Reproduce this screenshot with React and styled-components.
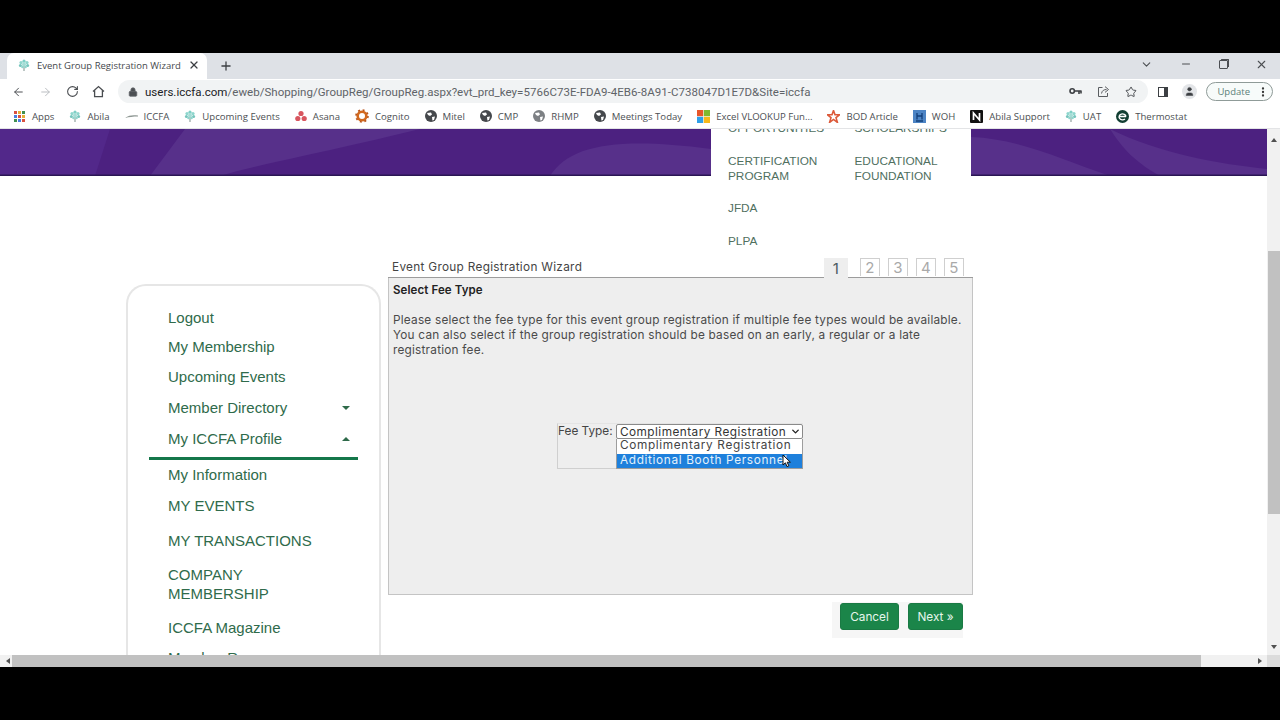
import React from "react";
import styled, { createGlobalStyle } from "styled-components";
import {
  ArrowLeft,
  ArrowRight,
  RotateCw,
  Lock,
  Star,
  X,
  Plus,
  Minus,
  ChevronDown,
  MoreVertical,
  User,
} from "lucide-react";

////colors////
const green = "#2f6b4b";
const chromeText = "#4a4d51";
const wizardFont = `Inter, "Open Sans", sans-serif`;

const GlobalStyle = createGlobalStyle`
  html, body { margin: 0; padding: 0; background: #000; overflow: hidden; }
  * { box-sizing: border-box; }
`;

const Screen = styled.div`
  width: 1280px;
  height: 720px;
  padding-top: 53px;
  background: #000;
  display: flex;
  flex-direction: column;
  font-family: "Open Sans", sans-serif;
`;

////browser chrome////
const TabStrip = styled.div`
  height: 26px;
  flex: none;
  background: #dee1e6;
  display: flex;
  align-items: stretch;
  padding-left: 7px;
`;
const Tab = styled.div`
  width: 200px;
  background: #fff;
  border-radius: 7px 7px 0 0;
  display: flex;
  align-items: center;
  padding: 0 7px 2px 11px;
  font-size: 9.5px;
  color: #45484c;
`;
const TabTitle = styled.span`
  flex: 1;
  margin-left: 7px;
  white-space: nowrap;
`;
const NewTab = styled.div`
  width: 37px;
  display: flex;
  align-items: center;
  justify-content: center;
  color: #3c3f43;
  padding-bottom: 1px;
`;
const WindowControls = styled.div`
  margin-left: auto;
  display: flex;
  align-items: center;
  gap: 27px;
  padding: 0 12px 4px 0;
  color: #4c4f53;
`;
const RestoreIcon = styled.div`
  width: 9px;
  height: 9px;
  border: 1px solid #4c4f53;
  border-radius: 1px;
  box-shadow: 1.5px -1.5px 0 -0.5px #4c4f53;
`;
const Toolbar = styled.div`
  height: 25px;
  flex: none;
  background: #fff;
  display: flex;
  align-items: center;
  padding: 0 7px 0 12px;
  color: ${chromeText};
`;
const NavButton = styled.div`
  width: 13px;
  margin-right: ${(props) => props.$gap}px;
  display: flex;
  justify-content: center;
  color: ${(props) => (props.$off ? "#b9bcc0" : chromeText)};
`;
const Omnibox = styled.div`
  margin-left: 13px;
  width: 1030px;
  height: 23px;
  background: #f1f3f4;
  border-radius: 12px;
  display: flex;
  align-items: center;
  padding-left: 10px;
  font-family: Roboto, sans-serif;
  font-size: 11.5px;
  color: #5f6368;
  letter-spacing: 0.03px;
  white-space: nowrap;
`;
const Host = styled.span`
  color: #202124;
  margin-left: 7px;
`;
const OmniActions = styled.div`
  margin-left: auto;
  display: flex;
  align-items: center;
  gap: 15px;
  padding-right: 11px;
  color: #4c4f53;
`;
const ToolActions = styled.div`
  display: flex;
  align-items: center;
  gap: 14px;
  margin-left: 10px;
`;
const SidePanelIcon = styled.div`
  width: 10px;
  height: 10px;
  border: 1.5px solid #3c3f43;
  border-right-width: 4px;
`;
const Avatar = styled.div`
  width: 15px;
  height: 15px;
  border-radius: 50%;
  background: #e3e5e8;
  display: flex;
  align-items: center;
  justify-content: center;
  color: #3c3f43;
`;
const UpdateButton = styled.div`
  margin-left: 9px;
  width: 67px;
  height: 19px;
  border: 1px solid #8f9b98;
  border-radius: 10px;
  display: flex;
  align-items: center;
  justify-content: flex-end;
  padding-right: 3px;
  gap: 7px;
  font-size: 9.5px;
  color: #5b7f79;
  background: #f7fbfa;
`;
const Bookmarks = styled.div`
  height: 25px;
  flex: none;
  background: #fff;
  border-bottom: 1px solid #e3e4e6;
  display: flex;
  align-items: center;
  padding-left: 13px;
  font-size: 9.6px;
  color: #4c4f53;
`;
const Bookmark = styled.div`
  display: flex;
  align-items: center;
  gap: 6px;
  margin-right: 15px;
  white-space: nowrap;
`;

////page////
const Viewport = styled.div`
  height: 526px;
  flex: none;
  display: flex;
  background: #fff;
`;
const Page = styled.div`
  position: relative;
  width: 1267px;
  overflow: hidden;
`;
const Banner = styled.svg`
  display: block;
  width: 1267px;
  height: 47px;
`;
const MegaMenu = styled.div`
  position: absolute;
  top: -8px;
  left: 711px;
  width: 260px;
  height: 130px;
  padding-left: 17px;
  background: #fff;
  display: grid;
  grid-template-columns: 126.5px 110px;
  grid-auto-rows: min-content;
  row-gap: 17.5px;
  font-family: "Liberation Sans", sans-serif;
  font-size: 11.8px;
  line-height: 15px;
  color: #50705f;
`;
const MegaItem = styled.div`
  white-space: pre-line;
  grid-column: ${(props) => (props.$full ? "1 / -1" : "auto")};
`;
const Content = styled.div`
  display: flex;
  align-items: flex-start;
  padding: 82px 0 0 126px;
  gap: 7px;
`;
const Sidebar = styled.nav`
  width: 255px;
  height: 500px;
  margin-top: 26px;
  padding: 17px 0 0 40px;
  border: 2px solid #e6e6e6;
  border-bottom: 0;
  border-radius: 20px 20px 0 0;
  font-family: "Liberation Sans", sans-serif;
  font-size: 15px;
  color: ${green};
`;
const NavItem = styled.div`
  height: ${(props) => props.$h}px;
  display: flex;
  align-items: center;
  justify-content: space-between;
  padding-right: 29px;
  line-height: 19px;
  white-space: pre-line;
`;
const NavRule = styled.div`
  width: 209px;
  height: 3px;
  margin: 3px 0 0 -19px;
  background: #14774a;
`;
const Caret = styled.span`
  width: 0;
  height: 0;
  border-left: 4px solid transparent;
  border-right: 4px solid transparent;
  border-${(props) => (props.$up ? "bottom" : "top")}: 4px solid #2e6a4a;
`;
const Wizard = styled.div`
  width: 585px;
  font-family: ${wizardFont};
  color: #444;
`;
const WizardHead = styled.div`
  height: 20px;
  display: flex;
  align-items: flex-start;
  padding: 2px 9px 0 4px;
  border-bottom: 1px solid #9c9c9c;
  font-size: 11.8px;
  letter-spacing: 0.3px;
  line-height: 15px;
`;
const WizardTitle = styled.div`
  flex: 1;
`;
const Steps = styled.div`
  display: flex;
  gap: 8px;
  margin-top: -2px;
  height: 20px;
`;
const Step = styled.div`
  width: ${(props) => (props.$active ? "24px" : "20px")};
  height: ${(props) => (props.$active ? "20px" : "18px")};
  margin-right: ${(props) => (props.$active ? "-3px" : "0")};
  display: flex;
  align-items: center;
  justify-content: center;
  font-size: 15px;
  background: ${(props) => (props.$active ? "#eeeeee" : "#fff")};
  color: ${(props) => (props.$active ? "#4c5a62" : "#a9a9a9")};
  border: ${(props) => (props.$active ? "0" : "1px solid #cfcfcf")};
  border-bottom: 0;
  position: relative;
  left: ${(props) => (props.$active ? "-7px" : "0")};
`;
const Panel = styled.div`
  position: relative;
  height: 317px;
  padding: 5px 5px 0 4px;
  background: #eeeeee;
  border: 1px solid #c4c4c4;
  border-top: 0;
`;
const PanelTitle = styled.div`
  font-size: 11.5px;
  font-weight: 600;
  line-height: 15px;
  letter-spacing: 0.1px;
  color: #222;
`;
const PanelText = styled.p`
  margin: 15px 0 0;
  font-size: 11.8px;
  line-height: 15px;
  letter-spacing: 0.22px;
  color: #4a4a4a;
`;
const FeeBox = styled.div`
  position: absolute;
  top: 145px;
  left: 168px;
  width: 246px;
  height: 46px;
  display: flex;
  align-items: flex-start;
  border-left: 1px solid #cfcfcf;
  border-bottom: 1px solid #cfcfcf;
  border-top: 1px solid #e4e4e4;
  font-size: 11.8px;
  color: #444;
`;
const FeeLabel = styled.label`
  width: 58px;
  line-height: 14px;
`;
const SelectWrap = styled.div`
  width: 187px;
  font-size: 11.8px;
`;
const SelectBox = styled.div`
  height: 15px;
  display: flex;
  align-items: center;
  justify-content: space-between;
  padding: 0 1px 0 3px;
  border: 1px solid #8a8a8a;
  border-radius: 2px;
  background: #fff;
  color: #333;
  letter-spacing: 0.45px;
  white-space: nowrap;
`;
const Option = styled.div`
  height: 14.5px;
  padding-left: 3px;
  line-height: 13.5px;
  letter-spacing: 0.65px;
  white-space: nowrap;
  background: ${(props) => (props.$selected ? "#1e80dc" : "#fff")};
  color: ${(props) => (props.$selected ? "#e4f1fb" : "#444")};
`;
const OptionList = styled.div`
  border: 1px solid #9d9d9d;
  border-top: 0;
`;
const Pointer = styled.svg`
  position: absolute;
  top: 30px;
  left: 224px;
`;
const Actions = styled.div`
  display: flex;
  justify-content: flex-end;
  padding: 7px 10px 0 0;
`;
const ActionGroup = styled.div`
  display: flex;
  gap: 9px;
  padding: 1px 0 8px 8px;
  background: #f6f6f6;
`;
const GreenButton = styled.button`
  width: ${(props) => props.$w}px;
  height: 27px;
  padding: 0;
  border: 1px solid #1a7a44;
  border-radius: 3px;
  background: #1b8549;
  color: #e6f6ec;
  font-family: ${wizardFont};
  font-size: 11.8px;
`;

////scrollbars////
const VScroll = styled.div`
  width: 13px;
  background: #f1f1f1;
  display: flex;
  flex-direction: column;
  align-items: center;
  padding: 6px 0 3px;
`;
const VThumb = styled.div`
  width: 12px;
  height: 263px;
  margin-top: 109px;
  background: #c1c1c1;
`;
const ScrollArrow = styled.span`
  width: 0;
  height: 0;
  border: 3px solid transparent;
  border-${(props) => props.$side}-color: #505050;
  border-${(props) => props.$side}-width: 4px;
  margin: ${(props) => props.$m || 0};
`;
const HScroll = styled.div`
  height: 12px;
  flex: none;
  background: #f1f1f1;
  display: flex;
  align-items: center;
  padding-left: 3px;
`;
const HThumb = styled.div`
  width: 1189px;
  height: 12px;
  margin-left: 2px;
  background: #c1c1c1;
`;
const ScrollCorner = styled.div`
  width: 13px;
  height: 12px;
  margin-left: 2px;
  background: #dcdcdc;
`;

////icons////
const Tree = ({ size = 12 }) => (
  <svg width={size} height={size} viewBox="0 0 12 12">
    <rect x="5.5" y="7" width="1" height="5" fill="#7d8f8c" />
    <circle cx="6" cy="2.2" r="1.6" fill="#7fcfc6" />
    <circle cx="3" cy="3.6" r="1.6" fill="#8ed6cd" />
    <circle cx="9" cy="3.6" r="1.6" fill="#8ed6cd" />
    <circle cx="2.4" cy="6.4" r="1.5" fill="#77c5bd" />
    <circle cx="9.6" cy="6.4" r="1.5" fill="#77c5bd" />
    <circle cx="6" cy="5.6" r="2" fill="#a4dcd5" />
    <circle cx="4.4" cy="8" r="1.2" fill="#8ed6cd" />
    <circle cx="7.6" cy="8" r="1.2" fill="#8ed6cd" />
  </svg>
);
const AppsGrid = () => {
  const colors = ["#d9503f", "#e6b035", "#3f8f4f", "#4a7fe0", "#d9503f", "#e6b035", "#3f8f4f", "#4a7fe0", "#d9503f"];
  return (
    <svg width="13" height="13" viewBox="0 0 13 13">
      {colors.map((c, i) => (
        <rect key={i} x={1 + (i % 3) * 4} y={1 + Math.floor(i / 3) * 4} width="3" height="3" fill={c} />
      ))}
    </svg>
  );
};
const Leaf = () => (
  <svg width="13" height="13" viewBox="0 0 13 13">
    <path d="M0 8 C4 5 8 5 13 5.5 L13 6.5 C8 6.5 4 7 0 8Z" fill="#8d9692" />
  </svg>
);
const AsanaDots = () => (
  <svg width="12" height="12" viewBox="0 0 12 12">
    <circle cx="6" cy="3.5" r="2.6" fill="#d8565f" />
    <circle cx="2.8" cy="8.5" r="2.6" fill="#d8565f" />
    <circle cx="9.2" cy="8.5" r="2.6" fill="#d8565f" />
  </svg>
);
const CognitoGear = () => (
  <svg width="14" height="14" viewBox="0 0 14 14">
    <circle cx="7" cy="7" r="4.3" fill="none" stroke="#d2691e" strokeWidth="2.6" />
    <circle cx="7" cy="7" r="6" fill="none" stroke="#b9541a" strokeWidth="1.6" strokeDasharray="2 2.7" />
  </svg>
);
const Globe = ({ light }) => (
  <svg width="12" height="12" viewBox="0 0 12 12">
    <circle cx="6" cy="6" r="6" fill={light ? "#7d8084" : "#45484c"} />
    <path d="M2 3 L6 2.6 L7 4.6 L5 6 L3 5Z M7 7 L10 6.4 L9 10 L7.4 10.4Z" fill="#fff" />
  </svg>
);
const ExcelLogo = () => (
  <svg width="13" height="13" viewBox="0 0 13 13">
    <rect width="6.2" height="6.2" fill="#e8562a" />
    <rect x="6.8" width="6.2" height="6.2" fill="#7fb92e" />
    <rect y="6.8" width="6.2" height="6.2" fill="#2f9fe8" />
    <rect x="6.8" y="6.8" width="6.2" height="6.2" fill="#f6b81a" />
  </svg>
);
const BodStar = () => (
  <svg width="13" height="13" viewBox="0 0 13 13">
    <path d="M6.5 0.5 L8 4.8 L12.6 4.8 L9 7.6 L10.4 12.4 L6.5 9.4 L2.6 12.4 L4 7.6 L0.4 4.8 L5 4.8Z" fill="none" stroke="#dc5a3a" strokeWidth="1.6" />
  </svg>
);
const WohBadge = () => (
  <svg width="13" height="13" viewBox="0 0 13 13">
    <rect width="13" height="13" fill="#4d84c4" />
    <path d="M4 3 V9.5 M9 3 V9.5 M4 6 H9 M3 11 H10" stroke="#123f7a" strokeWidth="1.3" fill="none" />
  </svg>
);
const NotionBadge = () => (
  <svg width="13" height="13" viewBox="0 0 13 13">
    <rect width="13" height="13" rx="1" fill="#111" />
    <path d="M3.5 10 V3 L9.5 10 V3" stroke="#fff" strokeWidth="1.7" fill="none" />
  </svg>
);
const EcobeeBadge = () => (
  <svg width="13" height="13" viewBox="0 0 13 13">
    <circle cx="6.5" cy="6.5" r="6.5" fill="#123f33" />
    <path d="M3 6.5 H10 M10 6.5 A3.5 3 0 1 0 9 9" stroke="#fff" strokeWidth="1.3" fill="none" />
  </svg>
);
const HomeIcon = () => (
  <svg width="13" height="13" viewBox="0 0 13 13" fill="none" stroke="currentColor" strokeWidth="1.3">
    <path d="M1 6.6 L6.5 1.6 L12 6.6 M2.6 5.4 V11.6 H10.4 V5.4" />
  </svg>
);
const KeyIcon = () => (
  <svg width="13" height="9" viewBox="0 0 13 9" fill="none" stroke="#3c3f43">
    <circle cx="3.2" cy="4" r="2.2" strokeWidth="1.6" />
    <path d="M5.4 4 H12.6 M10 4 V7 M12 4 V6.4" strokeWidth="1.6" />
  </svg>
);
const ShareIcon = () => (
  <svg width="13" height="13" viewBox="0 0 13 13" fill="none" stroke="#5a5d61" strokeWidth="1">
    <path d="M5.5 2.5 H1.5 V11.5 H10.5 V8" />
    <path d="M4.5 8.5 C5 5.5 7 4.5 9.5 4.5 M8 1.6 L11.5 4.5 L8 7.4" />
  </svg>
);

const bookmarks = [
  [<AppsGrid />, "Apps"],
  [<Tree />, "Abila"],
  [<Leaf />, "ICCFA"],
  [<Tree />, "Upcoming Events"],
  [<AsanaDots />, "Asana"],
  [<CognitoGear />, "Cognito"],
  [<Globe />, "Mitel"],
  [<Globe />, "CMP"],
  [<Globe light />, "RHMP"],
  [<Globe />, "Meetings Today"],
  [<ExcelLogo />, "Excel VLOOKUP Fun..."],
  [<BodStar />, "BOD Article"],
  [<WohBadge />, "WOH"],
  [<NotionBadge />, "Abila Support"],
  [<Tree />, "UAT"],
  [<EcobeeBadge />, "Thermostat"],
];

const navItems = [
  { label: "Logout", h: 29 },
  { label: "My Membership", h: 29 },
  { label: "Upcoming Events", h: 31 },
  { label: "Member Directory", h: 31, caret: "down" },
  { label: "My ICCFA Profile", h: 31, caret: "up" },
  { rule: true },
  { label: "My Information", h: 28 },
  { label: "MY EVENTS", h: 34 },
  { label: "MY TRANSACTIONS", h: 36 },
  { label: "COMPANY\nMEMBERSHIP", h: 51 },
  { label: "ICCFA Magazine", h: 36 },
  { label: "Member Resources", h: 24 },
];

const App = () => {
  return (
    <Screen>
      <GlobalStyle />
      <TabStrip>
        <Tab>
          <Tree />
          <TabTitle>Event Group Registration Wizard</TabTitle>
          <X size={12} strokeWidth={2.4} color="#3c3f43" />
        </Tab>
        <NewTab>
          <Plus size={14} strokeWidth={2.2} />
        </NewTab>
        <WindowControls>
          <ChevronDown size={13} />
          <Minus size={12} />
          <RestoreIcon />
          <X size={13} />
        </WindowControls>
      </TabStrip>

      <Toolbar>
        <NavButton $gap={14}>
          <ArrowLeft size={14} strokeWidth={1.8} />
        </NavButton>
        <NavButton $gap={14} $off>
          <ArrowRight size={14} strokeWidth={1.8} />
        </NavButton>
        <NavButton $gap={13}>
          <RotateCw size={13} strokeWidth={2} />
        </NavButton>
        <NavButton $gap={0}>
          <HomeIcon />
        </NavButton>
        <Omnibox>
          <Lock size={10} fill="#4c4f53" strokeWidth={2} />
          <Host>users.iccfa.com</Host>
          /eweb/Shopping/GroupReg/GroupReg.aspx?evt_prd_key=5766C73E-FDA9-4EB6-8A91-C738047D1E7D&Site=iccfa
          <OmniActions>
            <KeyIcon />
            <ShareIcon />
            <Star size={12} />
          </OmniActions>
        </Omnibox>
        <ToolActions>
          <SidePanelIcon />
          <Avatar>
            <User size={11} fill="#3c3f43" strokeWidth={1} />
          </Avatar>
        </ToolActions>
        <UpdateButton>
          Update
          <MoreVertical size={12} strokeWidth={2.6} color="#333" />
        </UpdateButton>
      </Toolbar>

      <Bookmarks>
        {bookmarks.map(([icon, label]) => (
          <Bookmark key={label}>
            {icon}
            {label}
          </Bookmark>
        ))}
      </Bookmarks>

      <Viewport>
        <Page>
          <Banner viewBox="0 0 1267 47" preserveAspectRatio="none">
            <rect width="1267" height="47" fill="#4c2180" />
            <path d="M0 0 H110 L95 47 H0Z" fill="#52288a" />
            <path d="M185 0 H420 C340 20 260 35 220 47 H150Z" fill="#57308a" />
            <path d="M550 47 C570 15 620 8 711 20 V47Z" fill="#57308a" />
            <path d="M971 8 C1020 10 1060 30 1110 47 H971Z" fill="#57308a" />
            <path d="M1110 0 C1160 25 1220 35 1267 40 V47 H1160 C1130 30 1120 15 1110 0Z" fill="#57308a" />
            <rect y="45.5" width="1267" height="1.5" fill="#2b1654" />
          </Banner>
          <MegaMenu>
            <MegaItem>OPPORTUNITIES</MegaItem>
            <MegaItem>SCHOLARSHIPS</MegaItem>
            <MegaItem>{"CERTIFICATION\nPROGRAM"}</MegaItem>
            <MegaItem>{"EDUCATIONAL\nFOUNDATION"}</MegaItem>
            <MegaItem $full>JFDA</MegaItem>
            <MegaItem $full>PLPA</MegaItem>
          </MegaMenu>
          <Content>
            <Sidebar>
              {navItems.map((item, i) =>
                item.rule ? (
                  <NavRule key={i} />
                ) : (
                  <NavItem key={i} $h={item.h}>
                    {item.label}
                    {item.caret && <Caret $up={item.caret === "up"} />}
                  </NavItem>
                )
              )}
            </Sidebar>
            <Wizard>
              <WizardHead>
                <WizardTitle>Event Group Registration Wizard</WizardTitle>
                <Steps>
                  {[1, 2, 3, 4, 5].map((n) => (
                    <Step key={n} $active={n === 1}>
                      {n}
                    </Step>
                  ))}
                </Steps>
              </WizardHead>
              <Panel>
                <PanelTitle>Select Fee Type</PanelTitle>
                <PanelText>
                  Please select the fee type for this event group registration if multiple fee types would be available.
                  You can also select if the group registration should be based on an early, a regular or a late
                  registration fee.
                </PanelText>
                <FeeBox>
                  <FeeLabel>Fee Type:</FeeLabel>
                  <SelectWrap>
                    <SelectBox>
                      Complimentary Registration
                      <ChevronDown size={11} strokeWidth={3} color="#222" />
                    </SelectBox>
                    <OptionList>
                      <Option>Complimentary Registration</Option>
                      <Option $selected>Additional Booth Personnel</Option>
                    </OptionList>
                  </SelectWrap>
                  <Pointer width="10" height="14" viewBox="0 0 10 14">
                    <path d="M1 1 V11 L3.4 8.8 L5 12.6 L6.8 11.8 L5.2 8.2 L8.4 8.2Z" fill="#fff" stroke="#111" strokeWidth="1" />
                  </Pointer>
                </FeeBox>
              </Panel>
              <Actions>
                <ActionGroup>
                  <GreenButton $w={59}>Cancel</GreenButton>
                  <GreenButton $w={55}>Next »</GreenButton>
                </ActionGroup>
              </Actions>
            </Wizard>
          </Content>
        </Page>
        <VScroll>
          <ScrollArrow $side="bottom" />
          <VThumb />
          <ScrollArrow $side="top" $m="auto 0 0" />
        </VScroll>
      </Viewport>
      <HScroll>
        <ScrollArrow $side="right" />
        <HThumb />
        <ScrollArrow $side="left" $m="0 0 0 auto" />
        <ScrollCorner />
      </HScroll>
    </Screen>
  );
};

export default App;
